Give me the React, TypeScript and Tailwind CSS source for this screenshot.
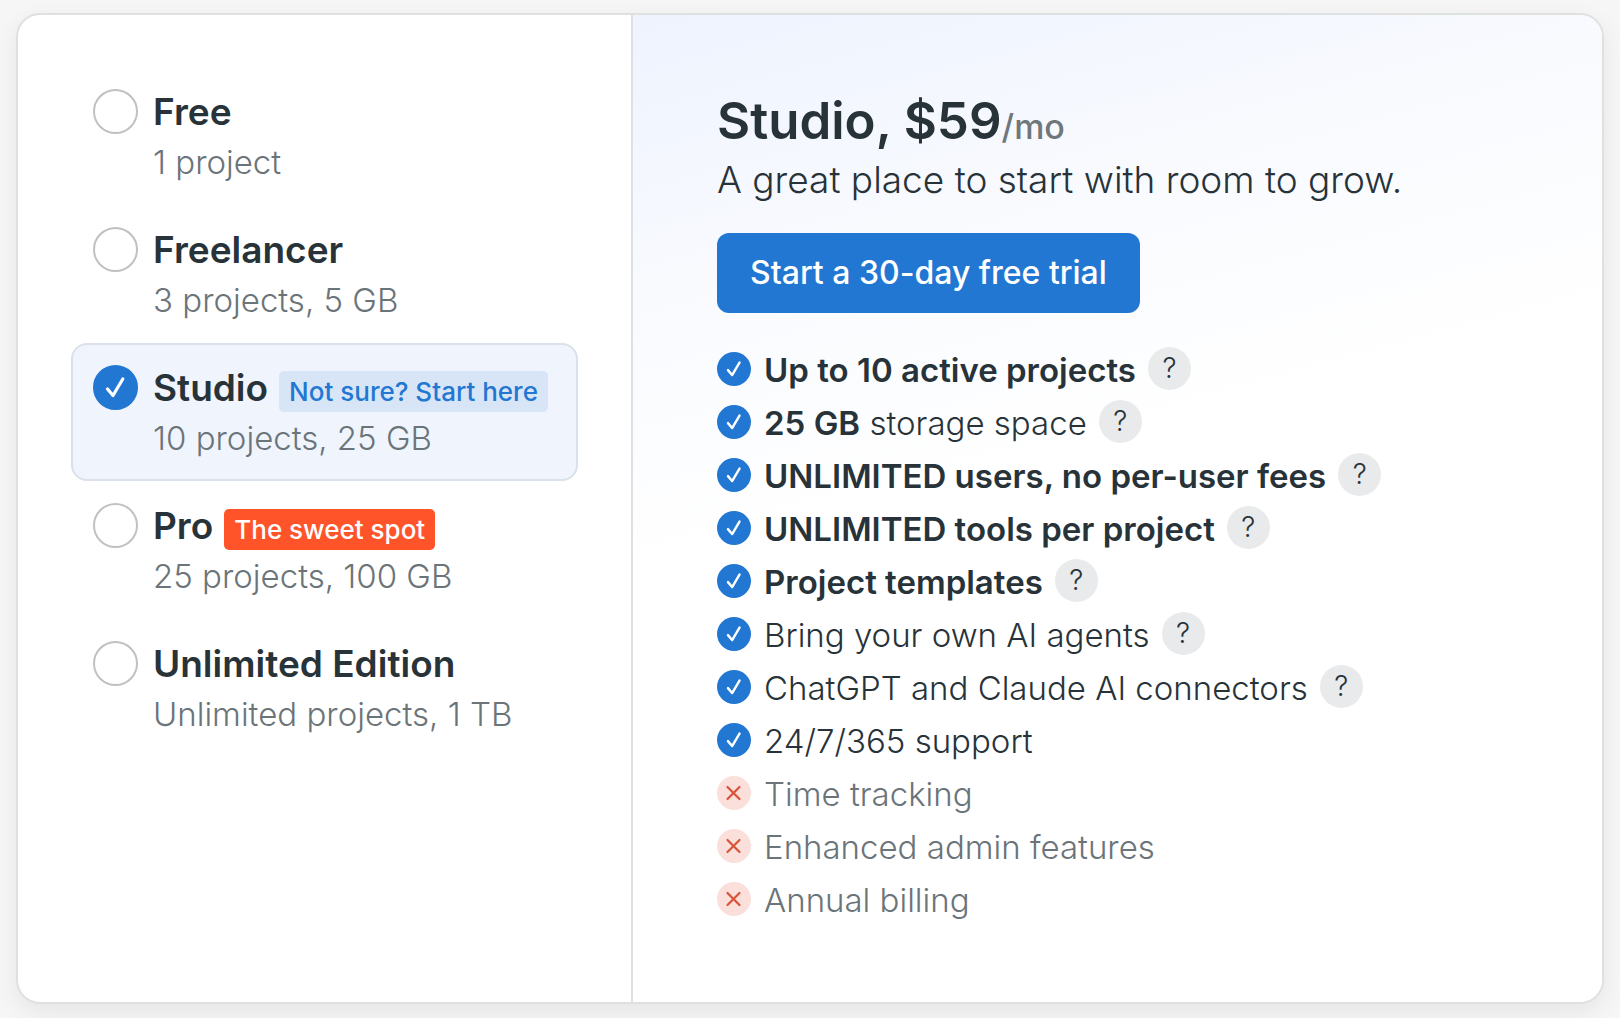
import { useState } from "react";

type Plan = { name: string; detail: string; badge?: string; badgeClass?: string };

const plans: Plan[] = [
  { name: "Free", detail: "1 project" },
  { name: "Freelancer", detail: "3 projects, 5 GB" },
  {
    name: "Studio",
    detail: "10 projects, 25 GB",
    badge: "Not sure? Start here",
    badgeClass: "bg-[#d8e5f6] text-[#2277d3]",
  },
  {
    name: "Pro",
    detail: "25 projects, 100 GB",
    badge: "The sweet spot",
    badgeClass: "bg-[#ff5429] text-white",
  },
  { name: "Unlimited Edition", detail: "Unlimited projects, 1 TB" },
];

type Feature = { strong?: string; text?: string; included: boolean; help?: boolean };

const features: Feature[] = [
  { strong: "Up to 10 active projects", included: true, help: true },
  { strong: "25 GB", text: " storage space", included: true, help: true },
  { strong: "UNLIMITED users, no per-user fees", included: true, help: true },
  { strong: "UNLIMITED tools per project", included: true, help: true },
  { strong: "Project templates", included: true, help: true },
  { text: "Bring your own AI agents", included: true, help: true },
  { text: "ChatGPT and Claude AI connectors", included: true, help: true },
  { text: "24/7/365 support", included: true },
  { text: "Time tracking", included: false },
  { text: "Enhanced admin features", included: false },
  { text: "Annual billing", included: false },
];

function Check({ className }: { className: string }) {
  return (
    <svg viewBox="0 0 45 45" className={className} fill="none" aria-hidden="true">
      <path
        d="M14.5 24 L20 30.5 L29.8 14"
        stroke="currentColor"
        strokeWidth="3.2"
        strokeLinecap="round"
        strokeLinejoin="round"
      />
    </svg>
  );
}

function PlanOption({ plan, checked, onSelect }: { plan: Plan; checked: boolean; onSelect: () => void }) {
  return (
    <label className="flex cursor-pointer gap-[15px] rounded-2xl border-2 border-transparent px-5 pt-5 pb-[14px] has-checked:border-[#dbe1ea] has-checked:bg-[#eff4fd]">
      <span className="grid size-[45px] shrink-0">
        <input
          type="radio"
          name="plan"
          checked={checked}
          onChange={onSelect}
          className="peer col-start-1 row-start-1 size-[45px] appearance-none rounded-full border-2 border-[#bfc1c2] bg-white checked:border-[#2277d3] checked:bg-[#2277d3]"
        />
        <Check className="pointer-events-none col-start-1 row-start-1 hidden size-[45px] text-white peer-checked:block" />
      </span>
      <span className="min-w-0">
        <span className="flex h-[46px] items-baseline gap-[11px] whitespace-nowrap">
          <span className="text-[37px] leading-[46px] font-semibold">{plan.name}</span>
          {plan.badge && (
            <span className={`rounded-[5px] px-[10px] text-[26px] leading-[41px] font-medium ${plan.badgeClass}`}>
              {plan.badge}
            </span>
          )}
        </span>
        <span className="block text-[33px] leading-[54px] font-[340] whitespace-nowrap text-[#6b7479]">{plan.detail}</span>
      </span>
    </label>
  );
}

function FeatureRow({ feature }: { feature: Feature }) {
  return (
    <li className="flex h-[53px] items-center whitespace-nowrap">
      {feature.included ? (
        <span className="mb-1 mr-[13px] size-[34px] rounded-full bg-[#2277d3] text-white">
          <Check className="size-[34px]" />
        </span>
      ) : (
        <span className="mb-1 mr-[13px] size-[34px] rounded-full bg-[#fadfda] text-[#d8533a]">
          <svg viewBox="0 0 34 34" className="size-[34px]" fill="none" aria-hidden="true">
            <path d="M10.5 11 L22.5 23 M22.5 11 L10.5 23" stroke="currentColor" strokeWidth="2.2" strokeLinecap="round" />
          </svg>
        </span>
      )}
      <span className={feature.included ? "" : "text-[#6b7479]"}>
        {feature.strong && <strong className="font-semibold">{feature.strong}</strong>}
        {feature.text}
      </span>
      {feature.help && (
        <button
          type="button"
          aria-label="More information"
          className="mb-1 ml-3 size-[43px] rounded-full bg-[#e9eaeb] text-center text-[28px] leading-[43px] font-[340]"
        >
          ?
        </button>
      )}
    </li>
  );
}

export default function App() {
  const [selected, setSelected] = useState("Studio");

  return (
    <div className="min-h-screen bg-[#f6f6f6] px-4 pt-[13px] pb-[14px] font-['Inter',sans-serif] text-[#283339]">
      <main className="grid grid-cols-[615fr_969fr] overflow-hidden rounded-3xl border-2 border-[#dfe0e0] bg-white shadow-[0_8px_24px_rgba(0,0,0,0.07)]">
        <fieldset aria-label="Choose a plan" className="min-w-0 border-r-2 border-[#dfe0e3] px-[53px] pt-[52px]">
          {plans.map((plan) => (
            <PlanOption
              key={plan.name}
              plan={plan}
              checked={selected === plan.name}
              onSelect={() => setSelected(plan.name)}
            />
          ))}
        </fieldset>
        <section className="min-w-0 bg-[linear-gradient(165deg,#eef3fe_0%,#f8fafe_22%,#ffffff_45%)] px-[84px] pt-[74px] pb-[75px]">
          <h1 className="text-[51px] leading-[64px] font-semibold">
            Studio, $59<span className="text-[34px] leading-none font-medium text-[#6f777b]">/mo</span>
          </h1>
          <p className="text-[37px] leading-[54px] font-[340]">A great place to start with room to grow.</p>
          <button
            type="button"
            className="mt-[26px] h-20 rounded-xl bg-[#2277d3] px-[33px] text-[32px] font-medium text-white"
          >
            Start a 30-day free trial
          </button>
          <ul className="mt-[31px] text-[33px] leading-[53px] font-[340]">
            {features.map((feature) => (
              <FeatureRow key={(feature.strong ?? "") + (feature.text ?? "")} feature={feature} />
            ))}
          </ul>
        </section>
      </main>
    </div>
  );
}
